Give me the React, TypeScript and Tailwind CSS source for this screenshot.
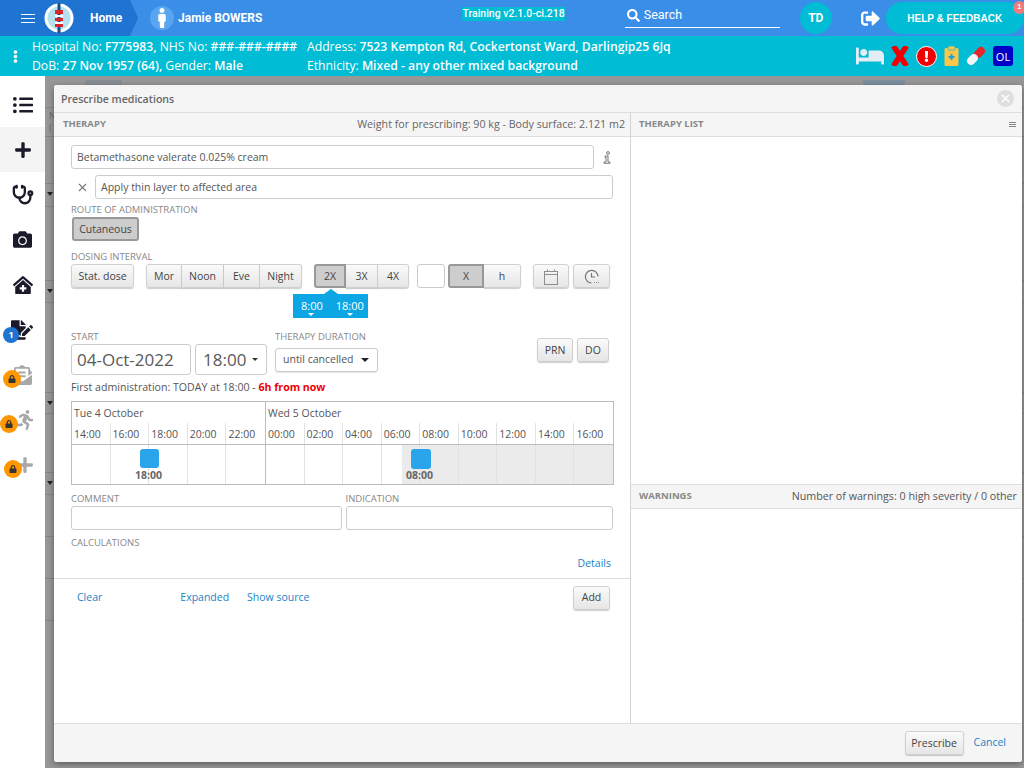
import React from "react";
import { FaBed, FaCamera, FaClinicMedical, FaEnvelopeOpenText, FaFileSignature, FaListUl, FaLock, FaPlus, FaRunning, FaSearch, FaSignOutAlt, FaExclamation, FaEllipsisV, FaMale } from "react-icons/fa";
import { Stethoscope, X } from "lucide-react";

const btn = "flex items-center justify-center rounded-[3px] border border-[#d0d0d0] bg-gradient-to-b from-[#fafafa] to-[#e6e6e6] pt-px text-[#444] text-[10.5px] shadow-[0_1px_1px_rgba(0,0,0,0.2)]";
const active = "flex items-center justify-center rounded-[3px] border-2 border-[#999] bg-[#cdcdcd] pt-px text-[#444] text-[10.5px]";
const label = "text-[9.5px] leading-[12px] text-[#888] uppercase";
const input = "rounded-[3px] border border-[#ccc] bg-white text-[#555] text-[10.5px]";
const hours1 = ["14:00", "16:00", "18:00", "20:00", "22:00"];
const hours2 = ["00:00", "02:00", "04:00", "06:00", "08:00", "10:00", "12:00", "14:00", "16:00"];

function Logo() {
  return (
    <svg width="30" height="30" viewBox="0 0 30 30" className="shrink-0">
      <circle cx="15" cy="15" r="14.5" fill="#fff" />
      <circle cx="15" cy="15" r="11.5" fill="#b5e0ee" />
      <rect x="13.5" y="0" width="3" height="30" fill="#1c4a8a" />
      <rect x="11" y="7" width="8" height="4" fill="#d8262c" />
      <rect x="11" y="12" width="8" height="2" fill="#fff" />
      <rect x="11" y="15" width="8" height="3" fill="#d8262c" />
      <rect x="11" y="19" width="8" height="2" fill="#fff" />
      <rect x="11" y="21" width="8" height="3" fill="#d8262c" />
    </svg>
  );
}

function Locked({ children, cls }: { children: React.ReactNode; cls: string }) {
  return (
    <div className="relative flex h-[45px] w-[45px] items-center justify-center text-[#a8a8a8]">
      {children}
      <span className={"absolute flex h-[18px] w-[18px] items-center justify-center rounded-full bg-[#ff9800] text-[#333] " + cls}>
        <FaLock size={8} />
      </span>
    </div>
  );
}

function Side({ children, on }: { children: React.ReactNode; on?: boolean }) {
  return <div className={"flex h-[45px] w-[45px] items-center justify-center text-[#1a1a2a] " + (on ? "bg-[#f4f4f4]" : "")}>{children}</div>;
}

function BgRow({ arrow, h, children }: { arrow?: boolean; h: string; children?: React.ReactNode }) {
  return (
    <div className={"relative overflow-hidden border-b border-[#858585] " + h}>
      {arrow && <span className="absolute left-[2px] top-[8px] h-0 w-0 border-x-[3px] border-t-[4px] border-x-transparent border-t-[#222]" />}
      {children}
    </div>
  );
}

export default function App() {
  return (
    <div className="relative flex h-[768px] w-[1024px] flex-col overflow-hidden font-['Open_Sans',sans-serif]">
      <header className="flex h-[36px] items-center bg-[#3a8ee8] text-white">
        <div className="flex h-full w-[138px] items-center bg-[#1f74d2] pl-[21px] [clip-path:polygon(0_0,130px_0,138px_18px,130px_36px,0_36px)]">
          <span className="mr-[9px] flex w-[14px] flex-col gap-[3px]">
            <i className="h-px w-full bg-white" />
            <i className="h-px w-full bg-white" />
            <i className="h-px w-full bg-white" />
          </span>
          <Logo />
          <span className="ml-[16px] font-['Roboto',sans-serif] text-[12px] font-bold">Home</span>
        </div>
        <span className="ml-[12px] flex h-[24px] w-[24px] items-center justify-center rounded-full bg-[#5aa5f0]"><FaMale size={20} /></span>
        <span className="ml-[4px] font-['Roboto',sans-serif] text-[12px] font-bold">Jamie BOWERS</span>
        <span className="mb-[8px] ml-[200px] bg-[#00bcd4] font-['Roboto',sans-serif] text-[10.5px] font-medium leading-[14px]">Training v2.1.0-ci.218</span>
        <div className="mb-[5px] ml-[60px] flex h-[24px] w-[155px] items-center gap-[4px] border-b border-white font-['Roboto',sans-serif] text-[12.5px]">
          <FaSearch size={13} className="ml-[2px]" />Search
        </div>
        <span className="ml-[20px] flex h-[32px] w-[32px] items-center justify-center rounded-full bg-[#00bcd4] font-['Roboto',sans-serif] text-[12px] font-bold">TD</span>
        <FaSignOutAlt size={19} className="ml-[29px]" />
        <div className="relative ml-[6px] flex h-[32px] w-[138px] items-center justify-center rounded-full bg-[#00bcd4] font-['Liberation_Sans',sans-serif] text-[10px] font-bold">
          HELP &amp; FEEDBACK
          <span className="absolute right-[-2px] top-[-1px] flex h-[13px] w-[13px] items-center justify-center rounded-full bg-[#ef7b7b] text-[7px]">1</span>
        </div>
      </header>
      <div className="flex h-[40px] items-center bg-[#00bcd4] text-[12.2px] leading-[19px] text-white">
        <FaEllipsisV size={13} className="ml-[9px] mr-[10px] shrink-0" />
        <div className="w-[275px] shrink-0">
          <div className="whitespace-nowrap">Hospital No: <b className="font-semibold">F775983,</b> NHS No: <b className="font-semibold">###-###-####</b></div>
          <div>DoB: <b className="font-semibold">27 Nov 1957 (64),</b> Gender: <b className="font-semibold">Male</b></div>
        </div>
        <div className="w-[500px] shrink-0">
          <div className="whitespace-nowrap">Address: <b className="font-semibold">7523 Kempton Rd, Cockertonst Ward, Darlingip25 6Jq</b></div>
          <div>Ethnicity: <b className="font-semibold">Mixed - any other mixed background</b></div>
        </div>
        <div className="ml-[49px] flex items-center gap-[7px]">
          <FaBed size={28} className="text-[#e3edf5]" />
          <svg width="18" height="20" viewBox="0 0 18 20"><path d="M2.5 0 L15.5 20 M15.5 0 L2.5 20" stroke="#f00000" strokeWidth="5.5" /></svg>
          <span className="flex h-[21px] w-[21px] items-center justify-center rounded-full border border-white bg-[#f00000] text-white"><FaExclamation size={11} /></span>
          <svg width="15" height="20" viewBox="0 0 15 20"><rect x="0.5" y="2" width="14" height="18" rx="1.5" fill="#fcc64a" /><rect x="4" y="0" width="7" height="4" rx="1" fill="#fcc64a" stroke="#00bcd4" strokeWidth="0.7" /><path d="M7.5 8 V14 M4.5 11 H10.5" stroke="#1aa0d8" strokeWidth="2" /></svg>
          <svg width="20" height="20" viewBox="0 0 20 20"><g transform="rotate(45 10 10)"><rect x="6" y="-1" width="8" height="12" fill="#e8262a" rx="4" /><rect x="6" y="9" width="8" height="12" rx="4" fill="#f5f5f5" /></g></svg>
          <span className="flex h-[20px] w-[20px] items-center justify-center rounded-[3px] bg-[#0000c8] text-[11px] text-white">OL</span>
        </div>
      </div>
      <div className="flex flex-1">
        <nav className="flex w-[45px] flex-col items-center bg-white pt-[6px]">
          <Side><FaListUl size={20} /></Side>
          <Side on><FaPlus size={18} /></Side>
          <Side><Stethoscope size={22} strokeWidth={2.5} /></Side>
          <Side><FaCamera size={19} /></Side>
          <Side><FaClinicMedical size={20} /></Side>
          <div className="relative flex h-[45px] w-[45px] items-center justify-center text-[#1a1a2a]">
            <FaFileSignature size={22} className="ml-[-2px]" />
            <span className="absolute left-[3px] top-[20px] flex h-[16px] w-[16px] items-center justify-center rounded-full bg-[#1f74d2] text-[9px] font-bold text-white">1</span>
          </div>
          <Locked cls="left-[3px] top-[18px]"><FaEnvelopeOpenText size={20} className="ml-[-1px]" /></Locked>
          <Locked cls="left-[0px] top-[18px]"><FaRunning size={20} className="ml-[4px]" /></Locked>
          <Locked cls="left-[4px] top-[18px]"><FaPlus size={18} className="ml-[4px]" /></Locked>
        </nav>
        <div className="flex flex-1 flex-col bg-[#979797]">
          <BgRow h="h-[32px]">
            <div className="flex pt-[4px]">
              <span className="ml-[40px] h-[10px] w-[37px] bg-[#878d92]" />
              <span className="ml-[741px] h-[10px] w-[42px] bg-[#7d8e9c]" />
            </div>
          </BgRow>
          <BgRow h="h-[29px]"><span className="block pl-[4px] pt-[2px] text-[9px] leading-[12px] text-[#6b6b6b]">N<br />(</span></BgRow>
          <BgRow h="h-[47px]" />
          <BgRow arrow h="h-[23px]" />
          <BgRow h="h-[74px]" />
          <BgRow arrow h="h-[22px]" />
          <BgRow h="h-[90px]" />
          <BgRow arrow h="h-[21px]" />
          <BgRow h="h-[59px]" />
          <BgRow arrow h="h-[22px]" />
          <BgRow h="h-[42px]" />
          <BgRow h="h-[42px]" />
          <BgRow h="h-[42px]" />
        </div>
      </div>

      <div className="absolute left-[54px] top-[85px] flex h-[677px] w-[968px] flex-col overflow-hidden rounded-[3px] bg-white shadow-[0_2px_6px_rgba(0,0,0,0.4)]">
        <div className="flex h-[28px] shrink-0 items-center justify-between border-b border-[#ddd] bg-[#f5f5f5] pl-[7px] pr-[8px]">
          <span className="pt-[2px] text-[10.6px] font-semibold text-[#666]">Prescribe medications</span>
          <span className="flex h-[17px] w-[17px] items-center justify-center rounded-full bg-[#dedede] text-white"><X size={13} strokeWidth={3} /></span>
        </div>
        <div className="flex min-h-0 flex-1">
          <section className="flex w-[577px] shrink-0 flex-col border-r border-[#d4d4d4]">
            <div className="flex h-[24px] shrink-0 items-center justify-between border-b border-[#ddd] bg-[#f5f5f5] pl-[9px] pr-[5px]">
              <span className="text-[9.5px] font-bold text-[#888]">THERAPY</span>
              <span className="text-[10.7px] text-[#666]">Weight for prescribing: 90 kg - Body surface: 2.121 m2</span>
            </div>
            <div className="px-[17px]">
              <div className="mt-[8px] flex items-center">
                <div className={input + " flex h-[24px] w-[523px] items-center pl-[5px] pt-px"}>Betamethasone valerate 0.025% cream</div>
                <svg width="8" height="13" viewBox="0 0 8 13" className="ml-[9px]" fill="none" stroke="#777" strokeWidth="1"><circle cx="5" cy="2" r="1.4" /><path d="M2 5 H5 L5 11 H7 V12.3 H1 V11 H3 L3 6.3 H2 Z" /></svg>
              </div>
              <div className="mt-[6px] flex items-center">
                <X size={13} className="ml-[5px] mr-[6px] text-[#777]" />
                <div className={input + " flex h-[24px] w-[518px] items-center pl-[5px] pt-px"}>Apply thin layer to affected area</div>
              </div>
              <div className={label + " mt-[5px]"}>Route of administration</div>
              <div className={active + " ml-[1px] mt-[1px] h-[24px] w-[67px]"}>Cutaneous</div>
              <div className={label + " mt-[10px]"}>Dosing interval</div>
              <div className="relative mt-[1px] flex h-[24px] items-center">
                <div className={btn + " h-[24px] w-[63px]"}>Stat. dose</div>
                <div className="ml-[12px] flex rounded-[3px]">
                  <div className={btn + " h-[24px] w-[36px] rounded-r-none"}>Mor</div>
                  <div className={btn + " h-[24px] w-[42px] rounded-none border-l-0"}>Noon</div>
                  <div className={btn + " h-[24px] w-[36px] rounded-none border-l-0"}>Eve</div>
                  <div className={btn + " h-[24px] w-[42px] rounded-l-none border-l-0"}>Night</div>
                </div>
                <div className="ml-[12px] flex">
                  <div className={active + " h-[24px] w-[32px] rounded-r-none"}>2X</div>
                  <div className={btn + " h-[24px] w-[32px] rounded-none border-l-0"}>3X</div>
                  <div className={btn + " h-[24px] w-[31px] rounded-l-none border-l-0"}>4X</div>
                </div>
                <div className="ml-[8px] h-[24px] w-[28px] rounded-[3px] border border-[#ccc] bg-white" />
                <div className="ml-[3px] flex">
                  <div className={active + " h-[24px] w-[36px] rounded-r-none"}>X</div>
                  <div className={btn + " h-[24px] w-[37px] rounded-l-none border-l-0"}>h</div>
                </div>
                <div className={btn + " ml-[12px] h-[24px] w-[36px]"}>
                  <svg width="16" height="16" viewBox="0 0 16 16" fill="none" stroke="#8d8d8d" strokeWidth="1"><rect x="1.5" y="2.5" width="13" height="13" /><path d="M1.5 5.5 H14.5 M4.5 0.5 V2.5 M11.5 0.5 V2.5" /></svg>
                </div>
                <div className={btn + " ml-[4px] h-[24px] w-[37px]"}>
                  <svg width="16" height="16" viewBox="0 0 16 16" fill="none" stroke="#777" strokeWidth="1.2"><path d="M14 7.5 A6.3 6.3 0 1 0 7.5 14" /><path d="M7.5 4 V8 H11" /><path d="M10 13.5 H10.8 M12 13.5 H12.8 M14 13.5 H14.8" /></svg>
                </div>
                <div className="absolute left-[222px] top-[30px] flex h-[24px] w-[75px] items-center gap-[13px] bg-[#0ca6e4] pl-[8px] text-[11px] text-white">
                  <span className="absolute left-[31px] top-[-5px] h-0 w-0 border-x-[7px] border-b-[5px] border-x-transparent border-b-[#0ca6e4]" />
                  <span className="relative">8:00<span className="absolute bottom-[-2px] left-[7px] h-0 w-0 border-x-[3px] border-t-[3px] border-x-transparent border-t-white" /></span>
                  <span className="relative">18:00<span className="absolute bottom-[-2px] left-[11px] h-0 w-0 border-x-[3px] border-t-[3px] border-x-transparent border-t-white" /></span>
                </div>
              </div>
              <div className="mt-[43px] flex h-[49px]">
                <div>
                  <div className={label}>Start</div>
                  <div className="mt-[1px] flex gap-[4px]">
                    <div className="flex h-[31px] w-[120px] items-center rounded-[3px] border border-[#ccc] pl-[5px] text-[17px] text-[#5a5a5a]">04-Oct-2022</div>
                    <div className="flex h-[31px] w-[72px] items-center rounded-[3px] border border-[#ccc] pl-[7px] text-[17px] text-[#5a5a5a]">18:00<span className="ml-[6px] h-0 w-0 border-x-[3px] border-t-[3px] border-x-transparent border-t-[#333]" /></div>
                  </div>
                </div>
                <div className="ml-[8px]">
                  <div className={label}>Therapy duration</div>
                  <div className="mt-[5px] flex h-[24px] w-[103px] items-center rounded-[3px] border border-[#ccc] pl-[7px] text-[10.5px] text-[#555] shadow-[0_1px_1px_rgba(0,0,0,0.1)]">until cancelled<span className="ml-[7px] h-0 w-0 border-x-[4px] border-t-[4px] border-x-transparent border-t-[#222]" /></div>
                </div>
                <div className={btn + " ml-[159px] mt-[7px] h-[24px] w-[36px]"}>PRN</div>
                <div className={btn + " ml-[4px] mt-[7px] h-[24px] w-[32px]"}>DO</div>
              </div>
              <div className="text-[10.6px] leading-[14px] text-[#555]">First administration: TODAY at 18:00 - <b className="text-[#f00000]">6h from now</b></div>
              <div className="relative mt-[7px] h-[84px] w-[543px] border border-[#bdbdbd] text-[10.5px] text-[#555]">
                <div className="absolute bottom-0 right-0 top-[42px] w-[211px] bg-[#ebebeb]" />
                <div className="relative grid h-[43px] grid-cols-[194px_1fr] border-b border-[#bdbdbd]">
                  <div className="flex flex-col border-r border-[#bdbdbd]">
                    <div className="h-[21px] pl-[2px] pt-[3px] leading-[16px]">Tue 4 October</div>
                    <div className="grid flex-1 grid-cols-5">
                      {hours1.map((h, i) => <div key={h} className={"pl-[2px] pt-[4px] leading-[14px] " + (i < 4 ? "border-r border-[#e2e2e2]" : "")}>{h}</div>)}
                    </div>
                  </div>
                  <div className="flex flex-col">
                    <div className="h-[21px] pl-[2px] pt-[3px] leading-[16px]">Wed 5 October</div>
                    <div className="grid flex-1 grid-cols-9">
                      {hours2.map((h, i) => <div key={i} className={"pl-[2px] pt-[4px] leading-[14px] " + (i < 8 ? "border-r border-[#e2e2e2]" : "")}>{h}</div>)}
                    </div>
                  </div>
                </div>
                <div className="absolute bottom-0 left-0 right-0 top-[43px] grid grid-cols-[194px_1fr]">
                  <div className="grid grid-cols-5 border-r border-[#bdbdbd]">
                    {hours1.map((h, i) => <div key={h} className={i < 4 ? "border-r border-[#e2e2e2]" : ""} />)}
                  </div>
                  <div className="grid grid-cols-9">
                    {hours2.map((h, i) => <div key={i} className={i < 8 ? "border-r border-[#e2e2e2]" : ""} />)}
                  </div>
                </div>
                <div className="absolute left-[68px] top-[47px] h-[19px] w-[19px] rounded-[3px] bg-[#2aa4ea]" />
                <div className="absolute left-[63px] top-[66px] text-[10.5px] font-bold leading-[14px] text-[#666]">18:00</div>
                <div className="absolute left-[339px] top-[47px] h-[20px] w-[20px] rounded-[3px] bg-[#2aa4ea]" />
                <div className="absolute left-[334px] top-[66px] text-[10.5px] font-bold leading-[14px] text-[#666]">08:00</div>
              </div>
              <div className="mt-[8px] flex gap-[4px]">
                <div className="w-[271px]">
                  <div className={label}>Comment</div>
                  <div className={input + " mt-[1px] h-[24px]"} />
                </div>
                <div className="w-[268px]">
                  <div className={label}>Indication</div>
                  <div className={input + " mt-[1px] h-[24px]"} />
                </div>
              </div>
              <div className={label + " mt-[7px]"}>Calculations</div>
              <div className="mt-[7px] pr-[2px] text-right text-[10.5px] leading-[14px] text-[#1a82c8]">Details</div>
            </div>
            <div className="mt-[8px] flex h-[38px] items-center border-t border-[#ddd] pl-[23px] pr-[20px] text-[10.5px] text-[#1a82c8]">
              <span>Clear</span>
              <span className="ml-[78px]">Expanded</span>
              <span className="ml-[18px]">Show source</span>
              <div className={btn + " ml-auto h-[24px] w-[37px]"}>Add</div>
            </div>
          </section>
          <section className="flex flex-1 flex-col">
            <div className="flex h-[24px] shrink-0 items-center justify-between border-b border-[#ddd] bg-[#f5f5f5] pl-[8px] pr-[6px]">
              <span className="text-[9.5px] font-bold text-[#888]">THERAPY LIST</span>
              <span className="flex flex-col gap-[1px]"><i className="h-px w-[7px] bg-[#888]" /><i className="h-px w-[7px] bg-[#888]" /><i className="h-px w-[7px] bg-[#888]" /></span>
            </div>
            <div className="h-[347px] shrink-0" />
            <div className="flex h-[25px] shrink-0 items-center justify-between border-y border-[#ddd] bg-[#f5f5f5] pl-[8px] pr-[5px]">
              <span className="text-[9.5px] font-bold text-[#888]">WARNINGS</span>
              <span className="text-[10.7px] text-[#555]">Number of warnings: 0 high severity / 0 other</span>
            </div>
            <div className="flex-1" />
          </section>
        </div>
        <div className="flex h-[39px] shrink-0 items-center justify-end border-t border-[#ddd] bg-[#f5f5f5] pr-[16px]">
          <div className={btn + " h-[24px] w-[59px]"}>Prescribe</div>
          <span className="ml-[10px] text-[10.5px] text-[#1a82c8]">Cancel</span>
        </div>
      </div>
    </div>
  );
}
